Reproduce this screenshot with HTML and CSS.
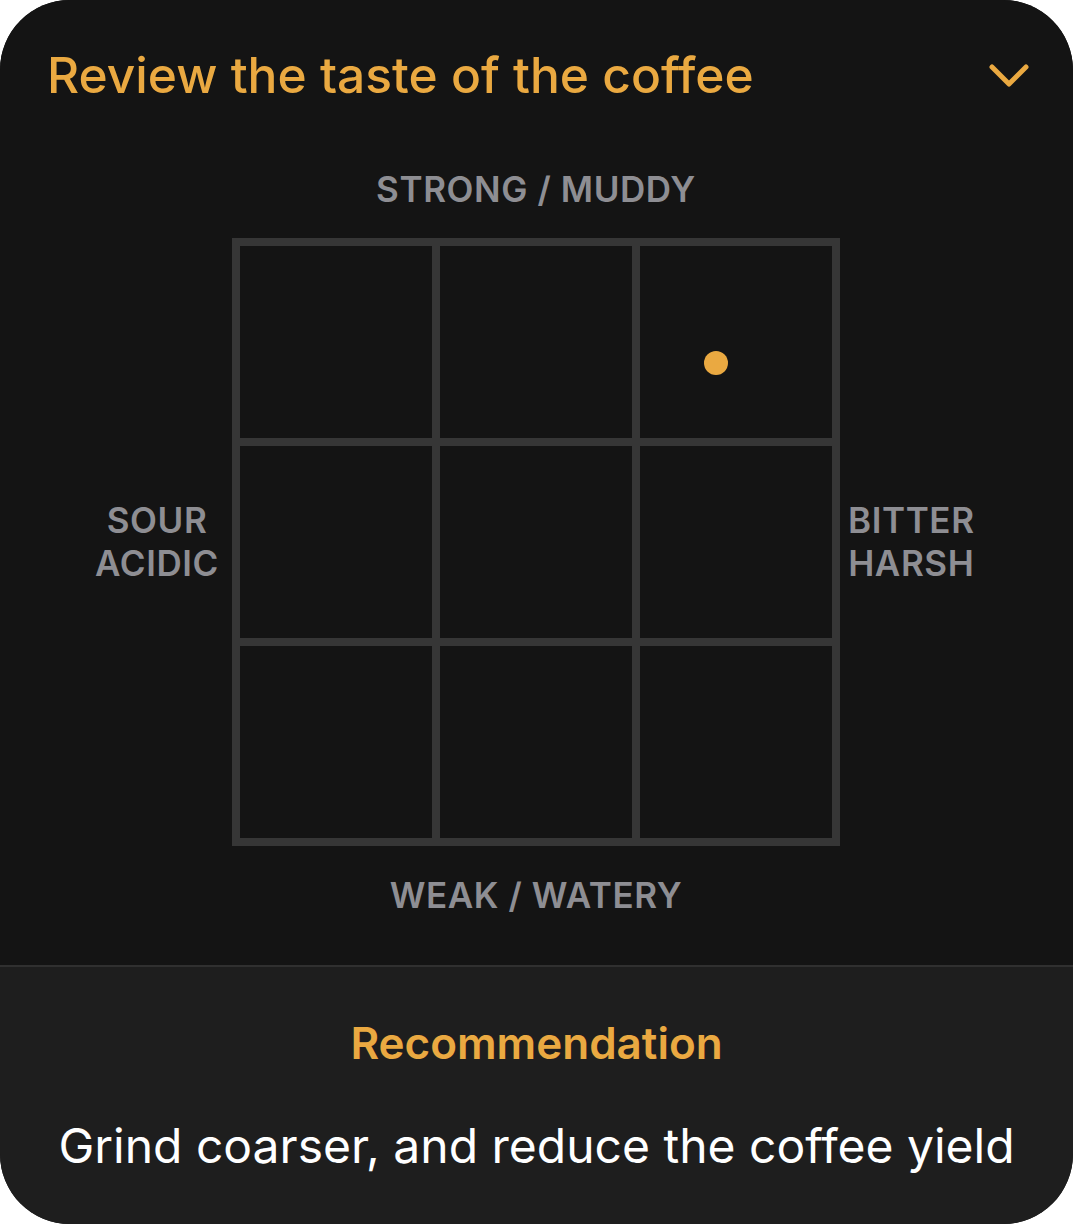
FILE: index.html
```html
<!DOCTYPE html>
<html lang="en">
<head>
<meta charset="utf-8">
<link rel="stylesheet" href="styles.css">
</head>
<body>
<div class="card">
  <div class="top">
    <div class="header">
      <h1 class="title">Review the taste of the coffee</h1>
      <svg class="chevron" width="40" height="24" viewBox="0 0 40 24"><path d="M3 3 L20 20 L37 3" fill="none" stroke="#EAA941" stroke-width="5" stroke-linecap="round" stroke-linejoin="round"/></svg>
    </div>
    <div class="chart">
      <div class="label label-top">STRONG / MUDDY</div>
      <div class="label label-left">SOUR<br>ACIDIC</div>
      <div class="grid">
        <div class="cell"></div>
        <div class="cell"></div>
        <div class="cell"><span class="dot"></span></div>
        <div class="cell"></div>
        <div class="cell"></div>
        <div class="cell"></div>
        <div class="cell"></div>
        <div class="cell"></div>
        <div class="cell"></div>
      </div>
      <div class="label label-right">BITTER<br>HARSH</div>
      <div class="label label-bottom">WEAK / WATERY</div>
    </div>
  </div>
  <div class="bottom">
    <h2 class="rec-title">Recommendation</h2>
    <p class="rec-text">Grind coarser, and reduce the coffee yield</p>
  </div>
</div>
</body>
</html>
```

FILE: styles.css
```css
* { box-sizing: border-box; }
html, body { margin: 0; padding: 0; background: #ffffff; }
body { font-family: Inter, "Noto Sans", sans-serif; }

.card {
  width: 1073px;
  height: 1224px;
  border-radius: 70px;
  overflow: hidden;
  background: #141414;
  display: flex;
  flex-direction: column;
}

.top {
  background: #141414;
  padding-bottom: 50px;
  border-bottom: 2px solid #303030;
}

.header {
  height: 150px;
  display: flex;
  align-items: center;
  justify-content: space-between;
  padding: 0 44px 0 47px;
}

.title {
  margin: 0;
  color: #EAA941;
  font-size: 49.7px;
  font-weight: 500;
  line-height: 60px;
  letter-spacing: 0;
}

.chevron { display: block; margin-top: 2px; }

.chart {
  display: grid;
  grid-template-columns: 232px 608px 1fr;
  grid-template-rows: 40px 608px 40px;
  row-gap: 29px;
  margin-top: 19px;
  align-items: center;
}

.label {
  color: #8E8E93;
  font-size: 35px;
  font-weight: 600;
  line-height: 43px;
  letter-spacing: 0.6px;
  text-align: center;
}

.label-top { grid-column: 2; grid-row: 1; }
.label-bottom { grid-column: 2; grid-row: 3; }
.label-left { grid-column: 1; grid-row: 2; justify-self: end; margin-right: 13px; }
.label-right { grid-column: 3; grid-row: 2; justify-self: start; margin-left: 8px; }

.grid {
  grid-column: 2;
  grid-row: 2;
  width: 608px;
  height: 608px;
  background: #363636;
  padding: 8px;
  display: grid;
  grid-template-columns: repeat(3, 192px);
  grid-template-rows: repeat(3, 192px);
  gap: 8px;
}

.cell {
  background: #141414;
  position: relative;
}

.dot {
  position: absolute;
  left: 64px;
  top: 105px;
  width: 24px;
  height: 24px;
  border-radius: 50%;
  background: #EAA941;
}

.bottom {
  flex: 1;
  background: #1E1E1E;
  padding-top: 48px;
  text-align: center;
}

.rec-title {
  margin: 0;
  color: #EAA941;
  font-size: 44px;
  font-weight: 600;
  line-height: 56px;
}

.rec-text {
  margin: 45px 0 0;
  color: #ffffff;
  font-size: 48px;
  font-weight: 400;
  line-height: 60px;
}
```
